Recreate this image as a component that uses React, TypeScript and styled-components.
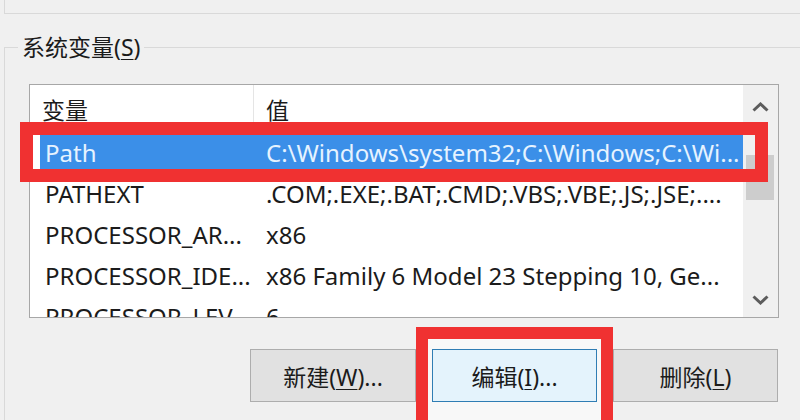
import React from 'react';
import styled, { createGlobalStyle } from 'styled-components';

const GlobalStyle = createGlobalStyle`
  html, body {
    margin: 0;
    padding: 0;
    background: #f0f0f0;
  }
  body {
    font-family: "Noto Sans", "Noto Sans CJK SC", sans-serif;
    color: #1b1b1b;
  }
`;

const Screen = styled.div`
  position: relative;
  width: 800px;
  height: 420px;
  overflow: hidden;
  background: #f0f0f0;
  font-size: 23px;
`;

const PrevGroup = styled.div`
  height: 13px;
  margin-left: 4px;
  border-left: 1px solid #d9d9d9;
  border-bottom: 1px solid #d9d9d9;
`;

const GroupBox = styled.fieldset`
  margin: 20px 0 0 4px;
  padding: 0;
  min-width: 0;
  border: none;
  border-top: 1px solid #d9d9d9;
  border-left: 1px solid #d9d9d9;
`;

const GroupLabel = styled.legend`
  margin-left: 13px;
  padding: 0 4px;
  line-height: 26px;
  font-size: 23px;
`;

const Mnemonic = styled.span`
  text-decoration: underline;
  text-underline-offset: 3px;
  text-decoration-thickness: 1px;
`;

const ListBox = styled.div`
  display: flex;
  width: 748px;
  height: 232px;
  margin: 24px 0 0 24px;
  background: #fff;
  border: 1px solid #a7a7a7;
`;

const Table = styled.div`
  flex: 1;
  min-width: 0;
  overflow: hidden;
`;

const HeaderRow = styled.div`
  display: grid;
  grid-template-columns: 224px 1fr;
  height: 47px;
`;

const HeaderCell = styled.div<{ $divider?: boolean }>`
  display: flex;
  align-items: center;
  padding-left: 12px;
  border-right: ${(p) => (p.$divider ? '1px solid #e5e5e5' : 'none')};
`;

const Row = styled.div<{ $selected?: boolean }>`
  display: grid;
  grid-template-columns: 224px 1fr;
  height: 41px;
  align-items: center;
  white-space: nowrap;
  font-size: 24px;
  background: ${(p) => (p.$selected ? '#3b8fe8' : 'transparent')};
  box-shadow: ${(p) => (p.$selected ? 'inset 10px 0 0 #ffffff' : 'none')};
  color: ${(p) => (p.$selected ? '#e6f3ff' : '#1b1b1b')};
`;

const NameCell = styled.div`
  padding-left: 15px;
  overflow: hidden;
`;

const ValueCell = styled.div`
  padding-left: 12px;
  overflow: hidden;
`;

const ScrollBar = styled.div`
  display: flex;
  flex-direction: column;
  width: 35px;
  background: #f0f0f0;
`;

const ArrowButton = styled.div<{ $h: number }>`
  display: flex;
  align-items: center;
  justify-content: center;
  height: ${(p) => p.$h}px;
`;

const Track = styled.div`
  flex: 1;
  padding: 26px 4px 0 3px;
`;

const Thumb = styled.div`
  height: 45px;
  background: #cdcdcd;
`;

const ButtonRow = styled.div`
  display: flex;
  justify-content: flex-end;
  align-items: flex-start;
  width: 749px;
  margin: 9px 0 0 24px;
`;

const WinButton = styled.button<{ $w: number; $focused?: boolean }>`
  width: ${(p) => p.$w}px;
  height: 53px;
  margin-top: ${(p) => (p.$focused ? 0 : 22)}px;
  padding: 0;
  font: inherit;
  color: #1b1b1b;
  background: ${(p) => (p.$focused ? '#e4f3fc' : '#e1e1e1')};
  border: 1px solid ${(p) => (p.$focused ? '#2f7db4' : '#adadad')};
`;

const Highlight = styled.div`
  border: 12px solid #f03131;
  padding: 10px 4px 24px;
  background: #f8f8f8;
`;

const RowHighlight = styled.div`
  position: absolute;
  left: 20px;
  top: 122px;
  width: 722px;
  height: 34px;
  border: 13px solid #f03131;
`;

const Chevron = ({ up }: { up?: boolean }) => (
  <svg width="17" height="10" viewBox="0 0 17 10">
    <polyline
      points={up ? '1.5,8.5 8.5,2 15.5,8.5' : '1.5,1.5 8.5,8 15.5,1.5'}
      fill="none"
      stroke="#5c5c5c"
      strokeWidth="3"
    />
  </svg>
);

const rows = [
  { name: 'Path', value: 'C:\\Windows\\system32;C:\\Windows;C:\\Wi...', selected: true },
  { name: 'PATHEXT', value: '.COM;.EXE;.BAT;.CMD;.VBS;.VBE;.JS;.JSE;....' },
  { name: 'PROCESSOR_AR...', value: 'x86' },
  { name: 'PROCESSOR_IDE...', value: 'x86 Family 6 Model 23 Stepping 10, Ge...' },
  { name: 'PROCESSOR_LEV...', value: '6' },
];

export default function App() {
  return (
    <Screen>
      <GlobalStyle />
      <PrevGroup />
      <GroupBox>
        <GroupLabel>
          系统变量(<Mnemonic>S</Mnemonic>)
        </GroupLabel>
        <ListBox>
          <Table>
            <HeaderRow>
              <HeaderCell $divider>变量</HeaderCell>
              <HeaderCell>值</HeaderCell>
            </HeaderRow>
            {rows.map((r) => (
              <Row key={r.name} $selected={r.selected}>
                <NameCell>{r.name}</NameCell>
                <ValueCell>{r.value}</ValueCell>
              </Row>
            ))}
          </Table>
          <ScrollBar>
            <ArrowButton $h={44}>
              <Chevron up />
            </ArrowButton>
            <Track>
              <Thumb />
            </Track>
            <ArrowButton $h={34}>
              <Chevron />
            </ArrowButton>
          </ScrollBar>
        </ListBox>
        <ButtonRow>
          <WinButton $w={166}>
            新建(<Mnemonic>W</Mnemonic>)...
          </WinButton>
          <Highlight>
            <WinButton $w={165} $focused>
              编辑(<Mnemonic>I</Mnemonic>)...
            </WinButton>
          </Highlight>
          <WinButton $w={165}>
            删除(<Mnemonic>L</Mnemonic>)
          </WinButton>
        </ButtonRow>
      </GroupBox>
      <RowHighlight />
    </Screen>
  );
}
